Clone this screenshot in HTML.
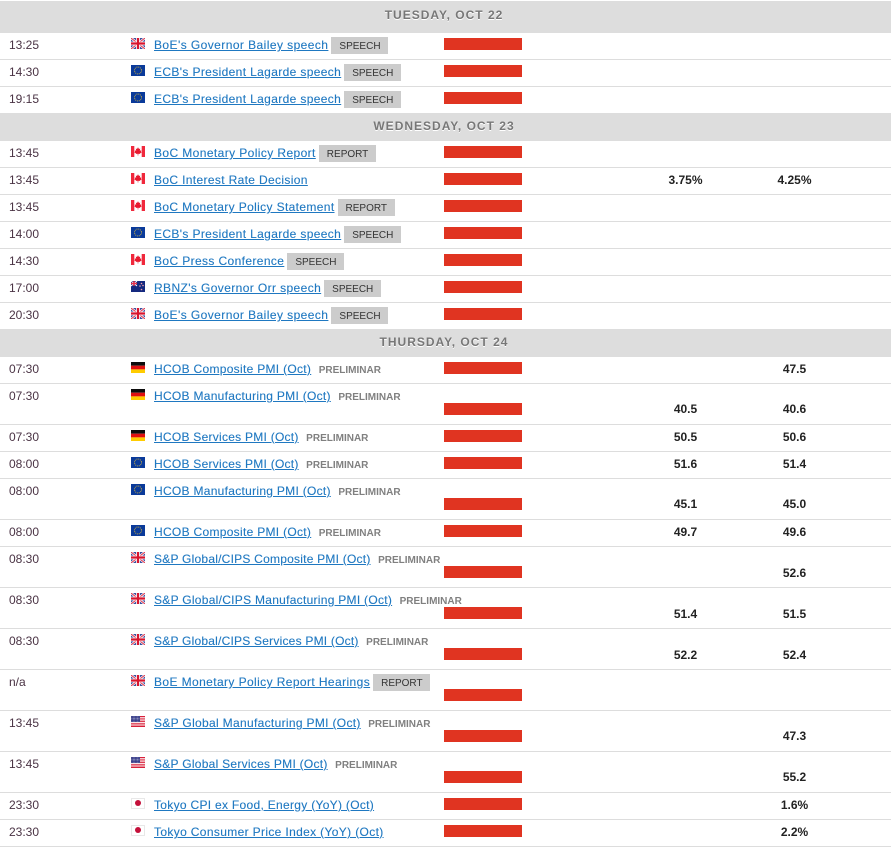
<!DOCTYPE html>
<html><head><meta charset="utf-8"><style>
html,body{margin:0;padding:0;background:#fff}
body{width:891px;height:847px;overflow:hidden;position:relative;font:12px/17px "Liberation Sans",Arial,sans-serif;color:#333}
.h{position:absolute;left:0;width:888px;height:27px;background:#ddd;text-align:center;line-height:27px;font-size:12px;font-weight:bold;letter-spacing:1px;color:#777;text-shadow:0 1px 0 #fff;padding-right:3px}
.r{position:absolute;left:0;width:891px;height:27px;box-sizing:border-box;border-bottom:1px solid #ddd}
.r.t{height:41px}
.c{position:absolute;left:9px;top:4px;color:#4a3344}
.f{position:absolute;left:131px;top:5px;width:14px;height:11px}
.n{position:absolute;left:154px;top:3px;white-space:nowrap;height:18px;line-height:18px}
.n a{color:#1f78c1;text-decoration:underline;-webkit-text-stroke:.12px #1f78c1}
.g{display:inline-block;margin-left:3px;height:17px;line-height:19px;padding:0 8px;background:#ccc;font-size:10px;color:#333;vertical-align:top;margin-top:1px;width:41px;white-space:nowrap;text-align:center}
.p{display:inline-block;margin-left:7.500px;font-size:10px;font-weight:bold;color:#808080}
.b{position:absolute;left:444px;top:5px;width:78px;height:12px;background:#e03421}
.t .b{top:19px}
.v{position:absolute;top:4px;width:100px;text-align:center;font-weight:bold;color:#222}
.t .v{top:17px}
.t .v.l{top:18px}
.a{left:635.5px}.e{left:744.5px}
</style></head><body>
<svg width="0" height="0" style="position:absolute"><defs>
<symbol id="gb" viewBox="0 0 14 11"><rect width="14" height="11" fill="#3a4f9f"/><path d="M0 0L14 11M14 0L0 11" stroke="#fff" stroke-width="2.400"/><path d="M0 0L14 11M14 0L0 11" stroke="#e03048" stroke-width="1"/><path d="M7 0V11M0 5.500H14" stroke="#fff" stroke-width="3.800"/><path d="M7 0V11M0 5.500H14" stroke="#d8142e" stroke-width="2.200"/></symbol>
<symbol id="eu" viewBox="0 0 14 11"><rect width="14" height="11" fill="#0a3a9a"/><circle cx="7" cy="5.500" r="3.500" fill="none" stroke="#b9a44a" stroke-width="1" stroke-dasharray="1 .85"/></symbol>
<symbol id="ca" viewBox="0 0 14 11"><rect width="14" height="11" fill="#fff"/><rect width="3.300" height="11" fill="#f0283c"/><rect x="10.700" width="3.300" height="11" fill="#f0283c"/><path d="M7 1.200L8 3L9.200 2.500L8.800 4.700L10.200 4.200L10 5.600L10.800 6.100L8.400 8L7.300 7.800V9.500H6.700V7.800L5.600 8L3.200 6.100L4 5.600L3.800 4.200L5.200 4.700L4.800 2.500L6 3Z" fill="#e8182e"/></symbol>
<symbol id="de" viewBox="0 0 14 11"><rect width="14" height="3.700" fill="#0c0c0c"/><rect y="3.700" width="14" height="3.700" fill="#e01010"/><rect y="7.400" width="14" height="3.600" fill="#ffcc00"/></symbol>
<symbol id="nz" viewBox="0 0 14 11"><rect width="14" height="11" fill="#14297f"/><path d="M0 0L6 5M6 0L0 5" stroke="#fff" stroke-width="1"/><path d="M3 0V5M0 2.500H6" stroke="#e8304a" stroke-width="1.400"/><circle cx="10.500" cy="2.500" r=".8" fill="#f2a0a8"/><circle cx="12" cy="4.500" r=".8" fill="#f2a0a8"/><circle cx="9" cy="5" r=".8" fill="#f2a0a8"/><circle cx="10.500" cy="8.500" r=".8" fill="#f2a0a8"/></symbol>
<symbol id="us" viewBox="0 0 14 11"><rect width="14" height="11" fill="#fff"/><path d="M0 .5H14M0 2.200H14M0 3.900H14M0 5.600H14M0 7.300H14M0 9H14M0 10.500H14" stroke="#d8203a" stroke-width=".9"/><rect width="9" height="6" fill="#2a2f80"/><path d="M.5 1H9M.5 2.400H9M.5 3.800H9M.5 5.200H9" stroke="#c4c8e0" stroke-width=".7" stroke-dasharray=".8 .6"/></symbol>
<symbol id="jp" viewBox="0 0 14 11"><rect x=".5" y=".5" width="13" height="10" fill="#fff" stroke="#e8e8e8"/><circle cx="7" cy="5" r="3" fill="#c4103a"/></symbol>
</defs></svg>

<div class="h" style="top:1px;height:32px;line-height:28px">TUESDAY, OCT 22</div>
<div class="r" style="top:33px"><span class="c">13:25</span><svg class="f"><use href="#gb"/></svg><div class="n"><a style="letter-spacing:.43px">BoE's Governor Bailey speech</a><span class="g">SPEECH</span></div><div class="b"></div></div>
<div class="r" style="top:60px"><span class="c">14:30</span><svg class="f"><use href="#eu"/></svg><div class="n"><a style="letter-spacing:.36px">ECB's President Lagarde speech</a><span class="g">SPEECH</span></div><div class="b"></div></div>
<div class="r" style="top:87px"><span class="c">19:15</span><svg class="f"><use href="#eu"/></svg><div class="n"><a style="letter-spacing:.36px">ECB's President Lagarde speech</a><span class="g">SPEECH</span></div><div class="b"></div></div>

<div class="h" style="top:113px;height:28px">WEDNESDAY, OCT 23</div>
<div class="r" style="top:141px"><span class="c">13:45</span><svg class="f"><use href="#ca"/></svg><div class="n"><a style="letter-spacing:.4px">BoC Monetary Policy Report</a><span class="g">REPORT</span></div><div class="b"></div></div>
<div class="r" style="top:168px"><span class="c">13:45</span><svg class="f"><use href="#ca"/></svg><div class="n"><a style="letter-spacing:.35px">BoC Interest Rate Decision</a></div><div class="b"></div><div class="v a">3.75%</div><div class="v e">4.25%</div></div>
<div class="r" style="top:195px"><span class="c">13:45</span><svg class="f"><use href="#ca"/></svg><div class="n"><a style="letter-spacing:.36px">BoC Monetary Policy Statement</a><span class="g">REPORT</span></div><div class="b"></div></div>
<div class="r" style="top:222px"><span class="c">14:00</span><svg class="f"><use href="#eu"/></svg><div class="n"><a style="letter-spacing:.36px">ECB's President Lagarde speech</a><span class="g">SPEECH</span></div><div class="b"></div></div>
<div class="r" style="top:249px"><span class="c">14:30</span><svg class="f"><use href="#ca"/></svg><div class="n"><a style="letter-spacing:.38px">BoC Press Conference</a><span class="g">SPEECH</span></div><div class="b"></div></div>
<div class="r" style="top:276px"><span class="c">17:00</span><svg class="f"><use href="#nz"/></svg><div class="n"><a style="letter-spacing:.39px">RBNZ's Governor Orr speech</a><span class="g">SPEECH</span></div><div class="b"></div></div>
<div class="r" style="top:303px"><span class="c">20:30</span><svg class="f"><use href="#gb"/></svg><div class="n"><a style="letter-spacing:.43px">BoE's Governor Bailey speech</a><span class="g">SPEECH</span></div><div class="b"></div></div>

<div class="h" style="top:329px;height:28px;line-height:27px">THURSDAY, OCT 24</div>
<div class="r" style="top:357px"><span class="c">07:30</span><svg class="f"><use href="#de"/></svg><div class="n"><a style="letter-spacing:.3px">HCOB Composite PMI (Oct)</a><span class="p">PRELIMINAR</span></div><div class="b"></div><div class="v e">47.5</div></div>
<div class="r t" style="top:384px"><span class="c">07:30</span><svg class="f"><use href="#de"/></svg><div class="n"><a style="letter-spacing:.29px">HCOB Manufacturing PMI (Oct)</a><span class="p">PRELIMINAR</span></div><div class="b"></div><div class="v a">40.5</div><div class="v e">40.6</div></div>
<div class="r" style="top:425px"><span class="c">07:30</span><svg class="f"><use href="#de"/></svg><div class="n"><a style="letter-spacing:.26px">HCOB Services PMI (Oct)</a><span class="p">PRELIMINAR</span></div><div class="b"></div><div class="v a">50.5</div><div class="v e">50.6</div></div>
<div class="r" style="top:452px"><span class="c">08:00</span><svg class="f"><use href="#eu"/></svg><div class="n"><a style="letter-spacing:.26px">HCOB Services PMI (Oct)</a><span class="p">PRELIMINAR</span></div><div class="b"></div><div class="v a">51.6</div><div class="v e">51.4</div></div>
<div class="r t" style="top:479px"><span class="c">08:00</span><svg class="f"><use href="#eu"/></svg><div class="n"><a style="letter-spacing:.29px">HCOB Manufacturing PMI (Oct)</a><span class="p">PRELIMINAR</span></div><div class="b"></div><div class="v a">45.1</div><div class="v e">45.0</div></div>
<div class="r" style="top:520px"><span class="c">08:00</span><svg class="f"><use href="#eu"/></svg><div class="n"><a style="letter-spacing:.3px">HCOB Composite PMI (Oct)</a><span class="p">PRELIMINAR</span></div><div class="b"></div><div class="v a">49.7</div><div class="v e">49.6</div></div>
<div class="r t" style="top:547px"><span class="c">08:30</span><svg class="f"><use href="#gb"/></svg><div class="n"><a style="letter-spacing:.23px">S&amp;P Global/CIPS Composite PMI (Oct)</a><span class="p">PRELIMINAR</span></div><div class="b"></div><div class="v e l">52.6</div></div>
<div class="r t" style="top:588px"><span class="c">08:30</span><svg class="f"><use href="#gb"/></svg><div class="n"><a style="letter-spacing:.28px">S&amp;P Global/CIPS Manufacturing PMI (Oct)</a><span class="p">PRELIMINAR</span></div><div class="b"></div><div class="v a l">51.4</div><div class="v e l">51.5</div></div>
<div class="r t" style="top:629px"><span class="c">08:30</span><svg class="f"><use href="#gb"/></svg><div class="n"><a style="letter-spacing:.22px">S&amp;P Global/CIPS Services PMI (Oct)</a><span class="p">PRELIMINAR</span></div><div class="b"></div><div class="v a l">52.2</div><div class="v e l">52.4</div></div>
<div class="r t" style="top:670px"><span class="c">n/a</span><svg class="f"><use href="#gb"/></svg><div class="n"><a style="letter-spacing:.4px">BoE Monetary Policy Report Hearings</a><span class="g">REPORT</span></div><div class="b"></div></div>
<div class="r t" style="top:711px"><span class="c">13:45</span><svg class="f"><use href="#us"/></svg><div class="n"><a style="letter-spacing:.32px">S&amp;P Global Manufacturing PMI (Oct)</a><span class="p">PRELIMINAR</span></div><div class="b"></div><div class="v e">47.3</div></div>
<div class="r t" style="top:752px"><span class="c">13:45</span><svg class="f"><use href="#us"/></svg><div class="n"><a style="letter-spacing:.27px">S&amp;P Global Services PMI (Oct)</a><span class="p">PRELIMINAR</span></div><div class="b"></div><div class="v e">55.2</div></div>
<div class="r" style="top:793px"><span class="c">23:30</span><svg class="f"><use href="#jp"/></svg><div class="n"><a style="letter-spacing:.3px">Tokyo CPI ex Food, Energy (YoY) (Oct)</a></div><div class="b"></div><div class="v e">1.6%</div></div>
<div class="r" style="top:820px"><span class="c">23:30</span><svg class="f"><use href="#jp"/></svg><div class="n"><a style="letter-spacing:.35px">Tokyo Consumer Price Index (YoY) (Oct)</a></div><div class="b"></div><div class="v e">2.2%</div></div>
</body></html>
